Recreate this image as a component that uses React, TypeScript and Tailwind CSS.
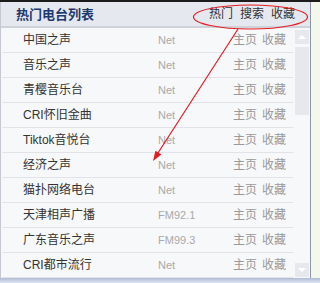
import React from "react";

const rows: { name: string; src: string }[] = [
  { name: "中国之声", src: "Net" },
  { name: "音乐之声", src: "Net" },
  { name: "青樱音乐台", src: "Net" },
  { name: "CRI怀旧金曲", src: "Net" },
  { name: "Tiktok音悦台", src: "Net" },
  { name: "经济之声", src: "Net" },
  { name: "猫扑网络电台", src: "Net" },
  { name: "天津相声广播", src: "FM92.1" },
  { name: "广东音乐之声", src: "FM99.3" },
  { name: "CRI都市流行", src: "Net" },
];

const font = { fontFamily: '"Liberation Sans", "Noto Sans CJK SC", sans-serif' };

export default function App() {
  return (
    <div
      className="relative w-[320px] h-[283px] overflow-hidden flex flex-col bg-[#f2f9ec]"
      style={font}
    >
      <div className="h-[2px] bg-[#1c1c1c] shrink-0" />
      <div className="flex flex-1 min-h-0">
        <div className="w-[310px] flex flex-col border-l border-[#c3c8d1] bg-[#f7f8fa]">
          <div className="h-[26px] shrink-0 bg-[#e5e8ee] border-b-2 border-[#cfd2d9] flex items-center justify-between pl-[15px] pr-[15px]">
            <span className="text-[13px] font-bold text-[#1d3a6e] leading-none">热门电台列表</span>
            <div className="flex gap-[7px] text-[12px] text-[#333] leading-none">
              <span>热门</span>
              <span>搜索</span>
              <span>收藏</span>
            </div>
          </div>
          <div className="flex flex-1 min-h-0">
            <div className="flex-1 pl-[1px] pr-[2px]">
              {rows.map((r) => (
                <div
                  key={r.name}
                  className="h-[25px] border-b border-[#e1e3e9] flex items-center pl-[21px] pr-[7px]"
                >
                  <span className="w-[135px] text-[12px] text-[#333] leading-none">{r.name}</span>
                  <span className="text-[11px] text-[#a9a9a9] leading-none">{r.src}</span>
                  <div className="ml-auto flex gap-[5px] text-[12px] text-[#999] leading-none">
                    <span>主页</span>
                    <span>收藏</span>
                  </div>
                </div>
              ))}
            </div>
            <div className="w-[14px] mr-[1px] flex flex-col pt-[2px] pb-[1px]">
              <div className="h-[14px] bg-[#e6e8ee] flex items-center justify-center">
                <div className="w-0 h-0 border-l-[4px] border-r-[4px] border-b-[4px] border-l-transparent border-r-transparent border-b-white" />
              </div>
              <div className="mt-[3px] h-[68px] bg-[#e6e8ee]" />
              <div className="flex-1" />
              <div className="h-[14px] bg-[#e6e8ee] flex items-center justify-center">
                <div className="w-0 h-0 border-l-[4px] border-r-[4px] border-t-[4px] border-l-transparent border-r-transparent border-t-white" />
              </div>
            </div>
          </div>
        </div>
        <div className="w-px bg-[#8d96a9]" />
        <div className="flex-1 bg-[#f2f9ec]" />
      </div>
      <div className="h-[5px] shrink-0 bg-gradient-to-b from-[#aebbd4] to-[#dfe6f2]" />

      <svg
        className="absolute left-0 top-0 pointer-events-none"
        width={320}
        height={283}
        viewBox="0 0 320 283"
      >
        <ellipse cx={250.5} cy={17} rx={57} ry={12} fill="none" stroke="#e41b23" strokeWidth={1.2} />
        <line x1={238} y1={29} x2={156} y2={156} stroke="#e41b23" strokeWidth={1.2} />
        <polygon points="153,161 161.4,154.5 155.5,150.7" fill="#e41b23" />
      </svg>
    </div>
  );
}
